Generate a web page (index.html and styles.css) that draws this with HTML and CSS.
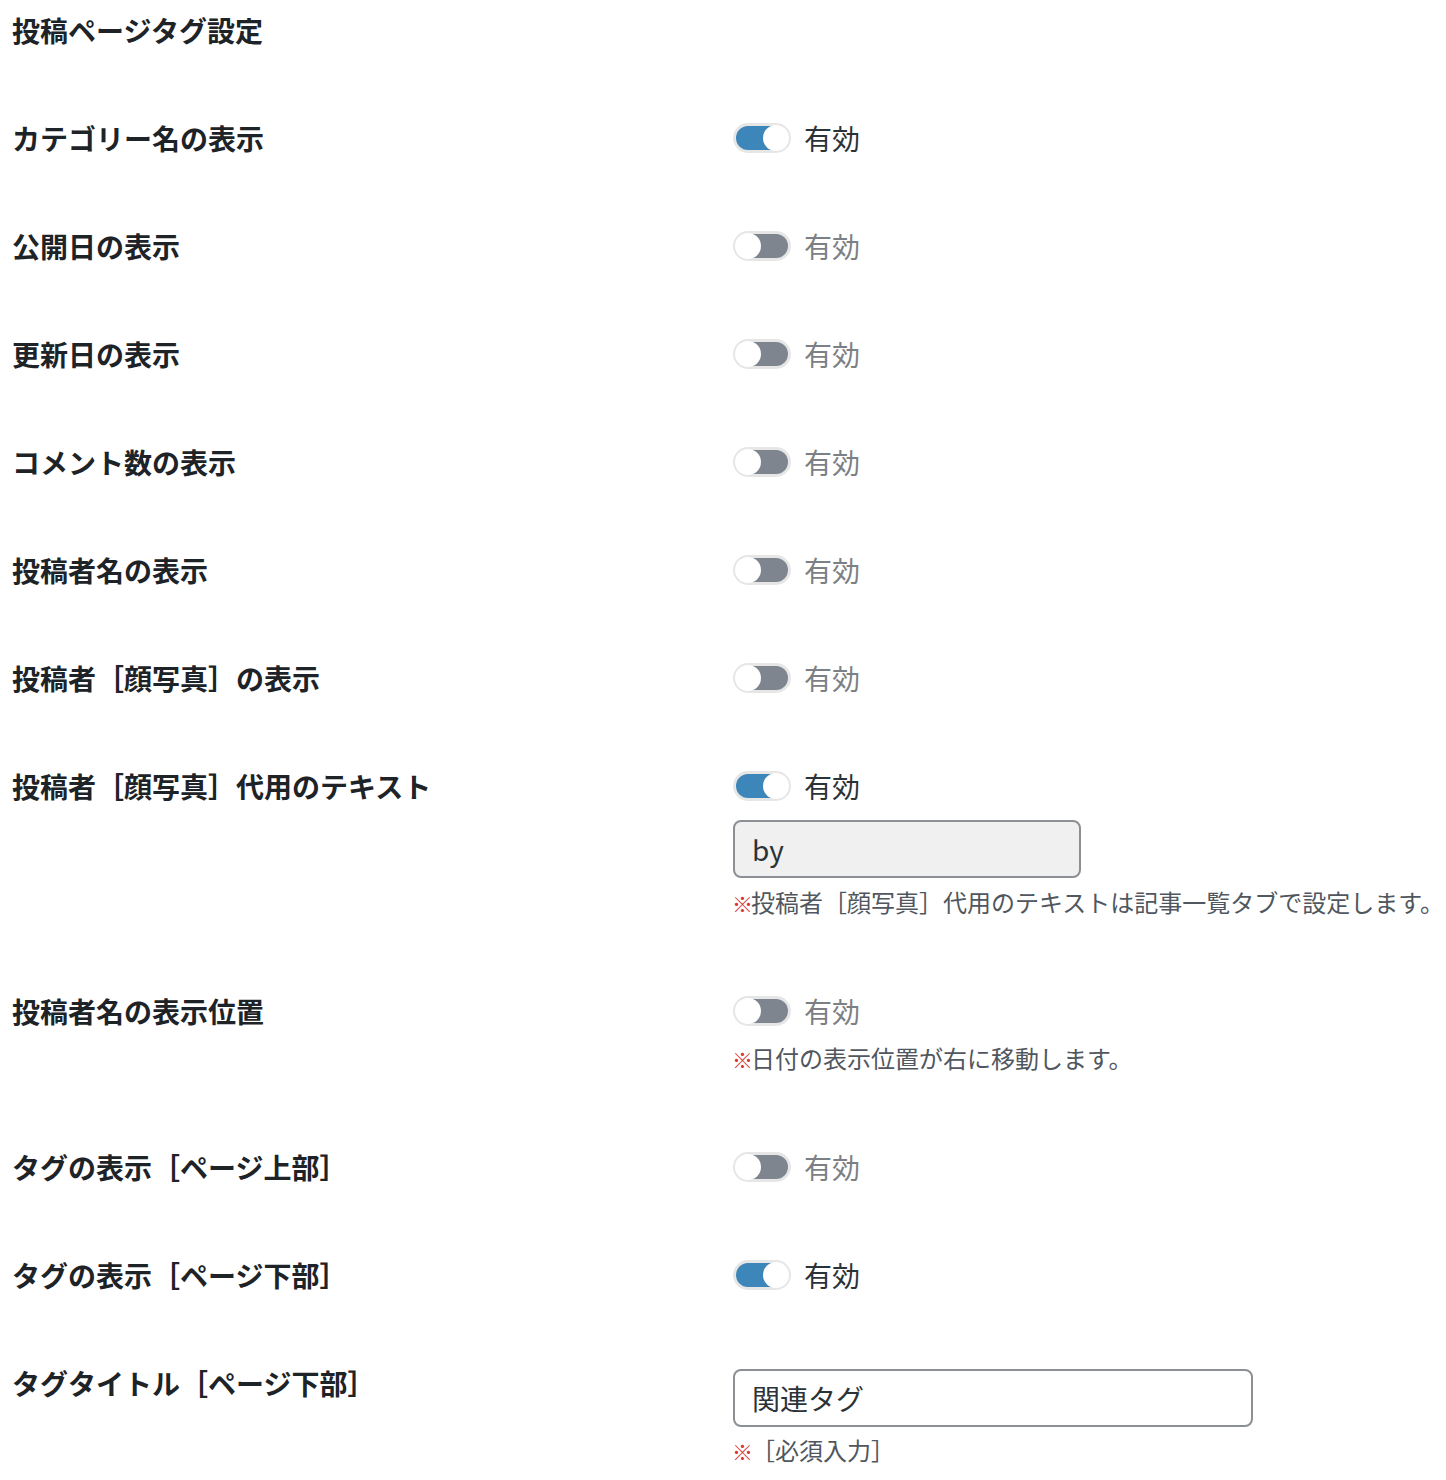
FILE: index.html
```html
<!DOCTYPE html>
<html lang="ja">
<head>
<meta charset="utf-8">
<link rel="stylesheet" href="styles.css">
</head>
<body>
<div class="page">
  <h2 class="title">投稿ページタグ設定</h2>
  <div class="rows">
    <div class="row">
      <div class="label">カテゴリー名の表示</div>
      <div class="field"><label class="switch-line"><span class="toggle on"><span class="knob"></span></span><span class="state">有効</span></label></div>
    </div>
    <div class="row">
      <div class="label">公開日の表示</div>
      <div class="field"><label class="switch-line"><span class="toggle"><span class="knob"></span></span><span class="state off">有効</span></label></div>
    </div>
    <div class="row">
      <div class="label">更新日の表示</div>
      <div class="field"><label class="switch-line"><span class="toggle"><span class="knob"></span></span><span class="state off">有効</span></label></div>
    </div>
    <div class="row">
      <div class="label">コメント数の表示</div>
      <div class="field"><label class="switch-line"><span class="toggle"><span class="knob"></span></span><span class="state off">有効</span></label></div>
    </div>
    <div class="row">
      <div class="label">投稿者名の表示</div>
      <div class="field"><label class="switch-line"><span class="toggle"><span class="knob"></span></span><span class="state off">有効</span></label></div>
    </div>
    <div class="row">
      <div class="label">投稿者［顔写真］の表示</div>
      <div class="field"><label class="switch-line"><span class="toggle"><span class="knob"></span></span><span class="state off">有効</span></label></div>
    </div>
    <div class="row">
      <div class="label">投稿者［顔写真］代用のテキスト</div>
      <div class="field">
        <label class="switch-line"><span class="toggle on"><span class="knob"></span></span><span class="state">有効</span></label>
        <div class="input input-readonly input-short">by</div>
        <p class="note"><span class="mark">※</span>投稿者［顔写真］代用のテキストは記事一覧タブで設定します。</p>
      </div>
    </div>
    <div class="row">
      <div class="label">投稿者名の表示位置</div>
      <div class="field">
        <label class="switch-line"><span class="toggle"><span class="knob"></span></span><span class="state off">有効</span></label>
        <p class="note note-after-switch"><span class="mark">※</span>日付の表示位置が右に移動します。</p>
      </div>
    </div>
    <div class="row">
      <div class="label">タグの表示［ページ上部］</div>
      <div class="field"><label class="switch-line"><span class="toggle"><span class="knob"></span></span><span class="state off">有効</span></label></div>
    </div>
    <div class="row">
      <div class="label">タグの表示［ページ下部］</div>
      <div class="field"><label class="switch-line"><span class="toggle on"><span class="knob"></span></span><span class="state">有効</span></label></div>
    </div>
    <div class="row">
      <div class="label">タグタイトル［ページ下部］</div>
      <div class="field">
        <div class="input input-long">関連タグ</div>
        <p class="note note-req"><span class="mark">※</span>［必須入力］</p>
      </div>
    </div>
  </div>
</div>
</body>
</html>
```

FILE: styles.css
```css
* { box-sizing: border-box; }
html, body {
  margin: 0;
  padding: 0;
  background: #ffffff;
}
body {
  font-family: "Noto Sans CJK JP", "Noto Sans", sans-serif;
  color: #1d2327;
}
.page {
  padding: 10px 12px 0 12px;
}
.title {
  margin: 0;
  font-size: 28px;
  line-height: 40px;
  font-weight: 700;
  color: #1d2327;
}
.rows {
  margin-top: 34px;
}
.row {
  display: grid;
  grid-template-columns: 721px 1fr;
  padding: 34px 0 34px 0;
}
.label {
  font-size: 28px;
  line-height: 40px;
  font-weight: 700;
  color: #1d2327;
}
.field {
  display: flex;
  flex-direction: column;
  align-items: flex-start;
}
.switch-line {
  display: flex;
  align-items: center;
  height: 40px;
  gap: 13px;
}
.toggle {
  position: relative;
  display: block;
  width: 58px;
  height: 30px;
  border-radius: 15px;
  background: #e6e6e6;
  padding: 3px;
}
.toggle::before {
  content: "";
  display: block;
  width: 52px;
  height: 24px;
  border-radius: 12px;
  background: #7e858f;
}
.toggle.on::before {
  background: #3d86b9;
}
.knob {
  position: absolute;
  top: 2px;
  left: 2px;
  width: 26px;
  height: 26px;
  border-radius: 50%;
  background: #ffffff;
}
.toggle.on .knob {
  left: 30px;
}
.state {
  font-size: 28px;
  line-height: 40px;
  color: #2c3338;
}
.state.off {
  color: #7c7f84;
}
.input {
  margin-top: 14px;
  height: 58px;
  border: 2px solid #8c8f94;
  border-radius: 8px;
  padding: 0 17px;
  font-size: 28px;
  line-height: 54px;
  color: #2c3338;
  background: #ffffff;
}
.input-readonly {
  background: #f0f0f0;
}
.input-short {
  width: 348px;
}
.input-long {
  width: 520px;
  margin-top: 6px;
}
.note {
  margin: 6px 0 2px 0;
  font-size: 24px;
  line-height: 36px;
  color: #50575e;
  white-space: nowrap;
}
.note-after-switch {
  margin-top: 9px;
}
.note-req {
  margin-top: 5px;
}
.mark {
  display: inline-block;
  width: 19px;
  margin-left: -1px;
  font-size: 21px;
  font-weight: 700;
  color: #d63638;
}
```
